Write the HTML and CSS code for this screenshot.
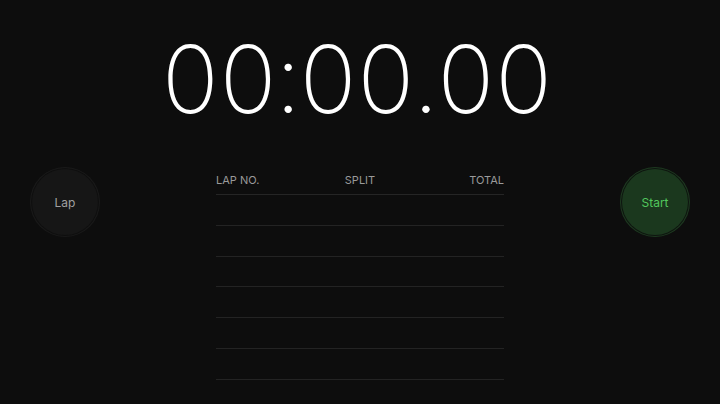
FILE: index.html
```html
<!DOCTYPE html>
<html lang="en">
<head>
<meta charset="utf-8">
<title>Stopwatch</title>
<link rel="stylesheet" href="styles.css">
</head>
<body>
<main class="stopwatch">
  <div class="timer">00:00.00</div>
  <section class="panel">
    <div class="side side-left">
      <button class="round-btn lap-btn" type="button"><span class="round-inner">Lap</span></button>
    </div>
    <div class="laps">
      <div class="laps-head">
        <span class="col col-lap">LAP NO.</span>
        <span class="col col-split">SPLIT</span>
        <span class="col col-total">TOTAL</span>
      </div>
      <div class="lap-row"></div>
      <div class="lap-row"></div>
      <div class="lap-row"></div>
      <div class="lap-row"></div>
      <div class="lap-row"></div>
      <div class="lap-row"></div>
    </div>
    <div class="side side-right">
      <button class="round-btn start-btn" type="button"><span class="round-inner">Start</span></button>
    </div>
  </section>
</main>
</body>
</html>
```

FILE: styles.css
```css
html, body {
  margin: 0;
  padding: 0;
  background: #0d0d0d;
  height: 100%;
  overflow: hidden;
}

.stopwatch {
  display: flex;
  flex-direction: column;
  height: 404px;
  font-family: Inter, "Liberation Sans", sans-serif;
}

.timer {
  margin-top: 32px;
  height: 94px;
  font-size: 94px;
  line-height: 94px;
  font-weight: 150;
  letter-spacing: -3px;
  padding-right: 9px;
  color: #ffffff;
  text-align: center;
  font-variant-numeric: tabular-nums;
  white-space: nowrap;
}

.panel {
  margin-top: 41px;
  display: grid;
  grid-template-columns: 1fr 288px 1fr;
  align-items: start;
}

.side {
  display: flex;
}

.side-left {
  justify-content: flex-start;
  padding-left: 30px;
}

.side-right {
  justify-content: flex-end;
  padding-right: 30px;
}

.round-btn {
  width: 70px;
  height: 70px;
  border-radius: 50%;
  padding: 2px;
  margin: 0;
  border: none;
  display: flex;
  align-items: center;
  justify-content: center;
  font-family: Inter, "Liberation Sans", sans-serif;
  font-size: 12px;
  cursor: pointer;
}

.round-inner {
  width: 100%;
  height: 100%;
  border-radius: 50%;
  display: flex;
  align-items: center;
  justify-content: center;
}

.lap-btn {
  background: #1a1a1a;
}

.lap-btn .round-inner {
  background: #161616;
  color: #a0a0a0;
  box-shadow: 0 0 0 1px #0f0f0f;
}

.start-btn {
  background: #1e3a21;
}

.start-btn .round-inner {
  background: #1b381e;
  color: #52c75d;
  box-shadow: 0 0 0 1px #0e150f;
}

.laps {
  display: flex;
  flex-direction: column;
}

.laps-head {
  display: grid;
  grid-template-columns: 1fr auto 1fr;
  align-items: start;
  height: 28px;
  padding-top: 7px;
  box-sizing: border-box;
  border-bottom: 1px solid #252525;
  font-size: 11px;
  line-height: 13px;
  color: #9a9a9a;
}

.col-lap { text-align: left; }
.col-split { text-align: center; }
.col-total { text-align: right; }

.lap-row {
  height: 30.8px;
  box-sizing: border-box;
  border-bottom: 1px solid #232323;
}
```
